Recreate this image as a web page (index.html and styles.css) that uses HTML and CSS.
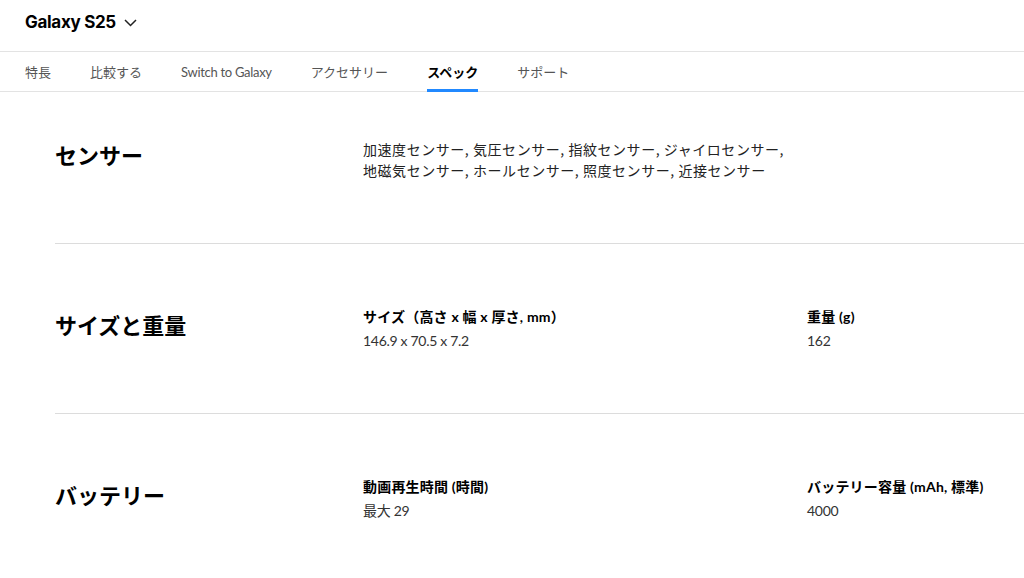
FILE: index.html
```html
<!DOCTYPE html>
<html lang="ja">
<head>
<meta charset="utf-8">
<title>Galaxy S25 スペック</title>
<link rel="stylesheet" href="styles.css">
</head>
<body>
<header class="topbar">
  <div class="product">
    <span class="product-name">Galaxy S25</span>
    <svg class="chevron" width="13" height="8" viewBox="0 0 13 8"><path d="M1 1 L6.5 6.5 L12 1" fill="none" stroke="#222" stroke-width="1.5"/></svg>
  </div>
</header>
<nav class="tabs">
  <a class="tab">特長</a>
  <a class="tab">比較する</a>
  <a class="tab latin">Switch to Galaxy</a>
  <a class="tab">アクセサリー</a>
  <a class="tab active">スペック</a>
  <a class="tab">サポート</a>
</nav>
<main class="specs">
  <section class="spec first">
    <h2 class="spec-title">センサー</h2>
    <p class="spec-text">加速度センサー, 気圧センサー, 指紋センサー, ジャイロセンサー,<br>地磁気センサー, ホールセンサー, 照度センサー, 近接センサー</p>
  </section>
  <section class="spec">
    <h2 class="spec-title">サイズと重量</h2>
    <div class="item">
      <div class="label">サイズ（高さ x 幅 x 厚さ, mm）</div>
      <div class="value">146.9 x 70.5 x 7.2</div>
    </div>
    <div class="item">
      <div class="label">重量 (g)</div>
      <div class="value">162</div>
    </div>
  </section>
  <section class="spec">
    <h2 class="spec-title">バッテリー</h2>
    <div class="item">
      <div class="label">動画再生時間 (時間)</div>
      <div class="value">最大 29</div>
    </div>
    <div class="item">
      <div class="label">バッテリー容量 (mAh, 標準)</div>
      <div class="value">4000</div>
    </div>
  </section>
</main>
</body>
</html>
```
FILE: styles.css
```css
* { box-sizing: border-box; }
html, body { margin: 0; padding: 0; background: #fff; }
body {
  font-family: Lato, "Noto Sans CJK JP", sans-serif;
  color: #000;
  overflow: hidden;
}
.topbar {
  height: 52px;
  border-bottom: 1px solid #e3e3e3;
  display: flex;
  align-items: center;
  padding: 0 25px;
}
.product { display: flex; align-items: center; gap: 8px; margin-top: -8px; }
.product-name {
  font-family: Inter, "Noto Sans", sans-serif;
  font-weight: 700;
  font-size: 17px;
  letter-spacing: -0.3px;
  color: #000;
}
.chevron { margin-top: 2px; }
.tabs {
  height: 40px;
  border-bottom: 1px solid #e3e3e3;
  display: flex;
  align-items: stretch;
  padding: 0 25px;
  gap: 39px;
}
.tab {
  position: relative;
  display: flex;
  align-items: center;
  font-size: 13px;
  color: #555;
  font-family: Lato, "Noto Sans CJK JP", sans-serif;
}
.tab.latin { letter-spacing: -0.3px; }
.tab.active { color: #000; font-weight: 700; }
.tab.active::after {
  content: "";
  position: absolute;
  left: 0; right: 0; bottom: -1px;
  height: 3px;
  background: #2189ff;
}
.specs { padding-left: 55px; }
.spec {
  display: grid;
  grid-template-columns: 308px 444px 1fr;
  align-items: start;
  border-top: 1px solid #dcdcdc;
  padding: 62px 0;
}
.spec.first { border-top: none; padding-top: 47px; }
.spec-title {
  margin: 0;
  font-family: "Noto Sans CJK JP", sans-serif;
  font-size: 22px;
  line-height: 30px;
  font-weight: 700;
}
.spec:not(.first) .spec-title { margin-top: 3px; }
.spec-text {
  margin: 0;
  grid-column: 2 / 4;
  font-family: "Noto Sans CJK JP", sans-serif;
  font-size: 14px;
  letter-spacing: 0.55px;
  line-height: 21px;
  color: #222;
}
.label {
  font-family: Lato, "Noto Sans CJK JP", sans-serif;
  font-size: 14px;
  line-height: 21px;
  font-weight: 700;
  letter-spacing: 0.2px;
  color: #000;
}
.value {
  margin-top: 3px;
  font-family: Lato, "Noto Sans CJK JP", sans-serif;
  font-size: 14px;
  line-height: 21px;
  letter-spacing: -0.3px;
  color: #333;
}
```
